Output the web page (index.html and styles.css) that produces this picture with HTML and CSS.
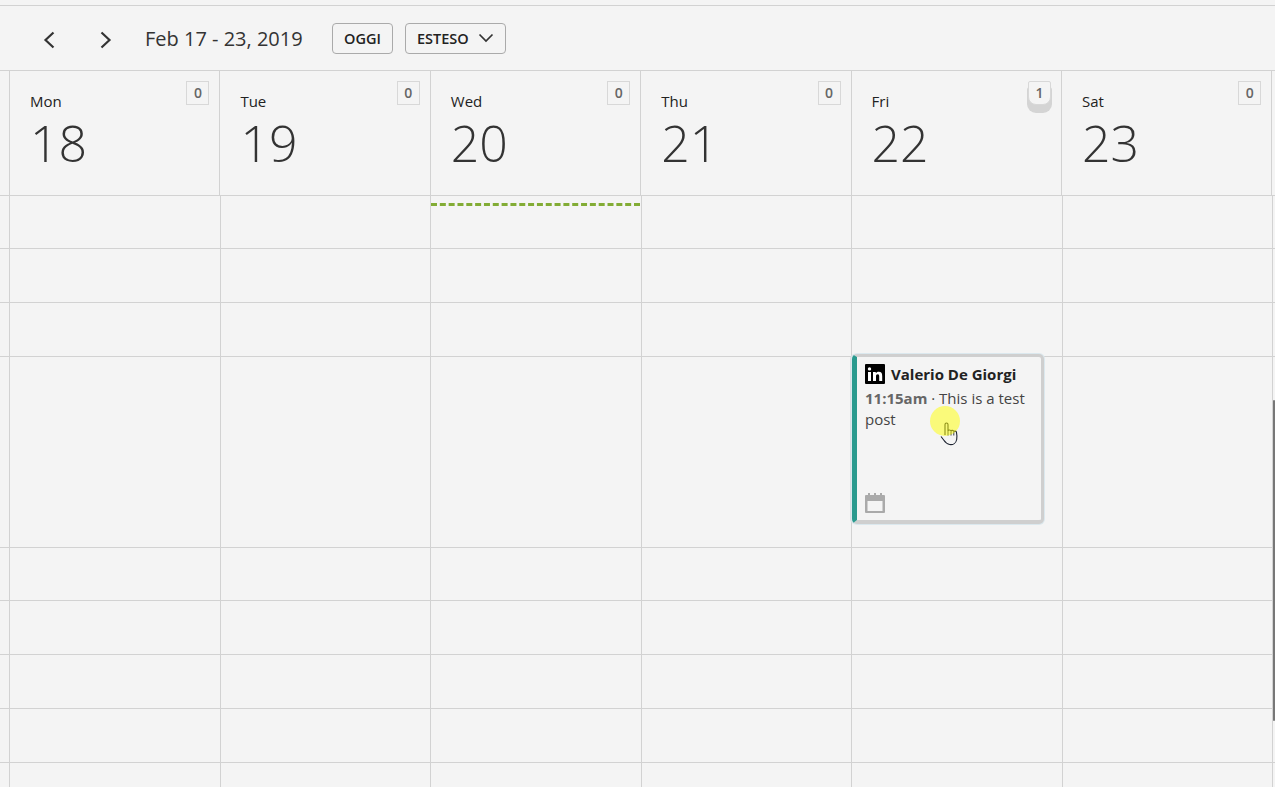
FILE: index.html
```html
<!DOCTYPE html>
<html lang="it">
<head>
    <meta charset="UTF-8">
    <meta name="viewport" content="width=device-width, initial-scale=1.0">
    <title>Calendario</title>
    <link rel="stylesheet" href="styles.css">
</head>
<body>
    <div class="top-strip"></div>
    <div class="toolbar">
        <button class="nav-btn" aria-label="Precedente">
            <svg width="14" height="20" viewBox="0 0 14 20"><path d="M11.500 2.500 3.500 10l8 7.500" fill="none" stroke="#333" stroke-width="2.200"/></svg>
        </button>
        <button class="nav-btn" aria-label="Successivo">
            <svg width="14" height="20" viewBox="0 0 14 20"><path d="M3.500 2.500 11.500 10l-8 7.500" fill="none" stroke="#333" stroke-width="2.200"/></svg>
        </button>
        <div class="range">Feb 17 - 23, 2019</div>
        <button class="btn">OGGI</button>
        <button class="btn btn-view">ESTESO
            <svg width="16" height="10" viewBox="0 0 16 10"><path d="M1.500 1.500 8 8l6.500-6.500" fill="none" stroke="#333" stroke-width="1.700"/></svg>
        </button>
    </div>

    <div class="week-head">
        <div class="day-head day-blank"></div>
        <div class="day-head"><span class="day-name">Mon</span><span class="day-num">18</span><span class="count">0</span></div>
        <div class="day-head"><span class="day-name">Tue</span><span class="day-num">19</span><span class="count">0</span></div>
        <div class="day-head"><span class="day-name">Wed</span><span class="day-num">20</span><span class="count">0</span></div>
        <div class="day-head"><span class="day-name">Thu</span><span class="day-num">21</span><span class="count">0</span></div>
        <div class="day-head"><span class="day-name">Fri</span><span class="day-num">22</span><span class="count count-stack">1</span></div>
        <div class="day-head"><span class="day-name">Sat</span><span class="day-num">23</span><span class="count">0</span></div>
        <div class="day-head day-blank day-end"></div>
    </div>

    <div class="week-body" id="grid"></div>
    <div class="scroll-thumb"></div>

    <script>
        // righe della griglia: altezze prese dalla vista settimanale
        const rows = [53, 54, 54, 191, 53, 54, 54, 54, 25];
        const grid = document.getElementById('grid');
        const eventHtml = `
            <div class="event">
                <div class="event-title">
                    <svg class="li-icon" width="20" height="20" viewBox="0 0 20 20"><rect width="20" height="20" rx="1" fill="#000"/><path d="M3 8h3v9H3zM4.500 3.200a1.700 1.700 0 1 1 0 3.400 1.700 1.700 0 0 1 0-3.400zM8 8h2.800v1.300C11.300 8.500 12.300 7.800 13.800 7.800c2.500 0 3.400 1.500 3.400 4.100V17h-3v-4.600c0-1.200-.3-2.100-1.500-2.100S11 11.200 11 12.400V17H8z" fill="#fff"/></svg>
                    <span class="event-name">Valerio De Giorgi</span>
                </div>
                <div class="event-text"><b>11:15am</b> · This is a test post</div>
                <svg class="cal-icon" width="20" height="20" viewBox="0 0 20 20"><rect y="2" width="20" height="18" rx="1" fill="#aaa"/><rect x="2.500" y="8" width="15" height="10" fill="#f4f4f4"/><path d="M3 0h2v3H3zM9 0h2v3H9zM15 0h2v3h-2z" fill="#aaa"/></svg>
                <svg class="hand" width="19" height="25" viewBox="0 0 19 25"><path d="M5 13V2.500c0-2 3-2 3 0V9c.2-1.400 2.800-1.400 3 .3.300-1.300 2.600-1.200 2.800.4.400-1 2.500-.8 2.700.8.500 2.500.6 5 .2 7-.7 3.500-3.700 5.500-7 5-2.800-.4-4.500-2.300-6-4.500L1 14.500" fill="none" stroke="#1c2230" stroke-width="1.100"/><path d="M8 9v4.500M11 9.500v4M13.800 10v3.500" fill="none" stroke="#1c2230" stroke-width=".9"/></svg>
                <div class="click-dot"></div>
            </div>`;

        rows.forEach((h, r) => {
            for (let c = 0; c < 8; c++) {
                const cell = document.createElement('div');
                cell.className = 'cell';
                cell.style.height = `${h}px`;
                if (r === 0 && c === 3) cell.innerHTML = '<div class="now-line"></div>';
                if (r === 3 && c === 5) cell.innerHTML = eventHtml;
                grid.appendChild(cell);
            }
        });
    </script>
</body>
</html>
```

FILE: styles.css
```css
html, body {
    height: 100%;
}
body {
    margin: 0;
    background-color: #f4f4f4;
    font-family: "Open Sans", "Liberation Sans", sans-serif;
    color: #333;
    overflow: hidden;
    position: relative;
}
.top-strip {
    height: 5px;
    border-bottom: 1px solid #d2d2d2;
}
.toolbar {
    display: flex;
    align-items: center;
    height: 65px;
    box-sizing: border-box;
    border-bottom: 1px solid #d2d2d2;
    padding: 0 0 0 42px;
}
.nav-btn {
    width: 14px;
    height: 20px;
    padding: 0;
    margin: 4px 42px 0 0;
    border: none;
    background: none;
    display: flex;
}
.nav-btn + .nav-btn {
    margin-right: 33px;
}
.range {
    font-size: 20px;
    width: 187px;
    color: #333;
}
.btn {
    height: 31px;
    padding: 0 11px;
    margin-right: 12px;
    box-sizing: border-box;
    font-family: inherit;
    font-size: 14.500px;
    font-weight: 600;
    color: #222;
    background-color: #f4f4f4;
    border: 1px solid #aaa;
    border-radius: 4px;
    display: flex;
    align-items: center;
}
.btn-view {
    gap: 9px;
}
.week-head {
    display: grid;
    grid-template-columns: 10px repeat(6, 210.4px) 1fr;
    height: 125px;
    box-sizing: border-box;
    border-bottom: 1px solid #d2d2d2;
}
.day-head {
    position: relative;
    box-sizing: border-box;
    height: 124px;
    border-right: 1px solid #d2d2d2;
    padding: 20px 0 0 20px;
    display: flex;
    flex-direction: column;
}
.day-blank {
    padding: 0;
}
.day-end {
    border-right: none;
}
.day-name {
    font-size: 15px;
    line-height: 20px;
    color: #222;
}
.day-num {
    font-size: 50px;
    font-weight: 300;
    line-height: 64px;
    color: #333;
}
.count {
    position: absolute;
    top: 10px;
    right: 10px;
    width: 21px;
    height: 22px;
    border: 1px solid #d8d8d8;
    font-size: 14px;
    font-weight: 600;
    line-height: 22px;
    text-align: center;
    color: #666;
    background-color: #f4f4f4;
}
.count-stack {
    box-shadow: 0 7px 0 1px #d4d4d4;
    border-radius: 2px 2px 8px 8px;
}
.week-body {
    display: grid;
    grid-template-columns: 10px repeat(6, 210.5px) 1fr;
}
.cell {
    position: relative;
    box-sizing: border-box;
    border-right: 1px solid #d2d2d2;
    border-bottom: 1px solid #d2d2d2;
}
.cell:nth-child(8n) {
    border-right: none;
}
.now-line {
    margin: 7px 1px 0 0;
    border-top: 3px dashed #82ac35;
}
.event {
    position: absolute;
    top: -3px;
    left: 0;
    width: 192px;
    height: 170px;
    box-sizing: border-box;
    padding: 7px 8px 0 8px;
    background-color: #f4f4f4;
    border: 3px solid #cfcfcf;
    border-bottom-width: 4px;
    border-left: 5px solid #2a9a8e;
    border-radius: 5px;
    box-shadow: 0 0 0 1px #dbe8ee, -2px 0 0 0 #d8e0e3;
    z-index: 2;
}
.event-title {
    display: flex;
    align-items: center;
    gap: 6px;
    height: 20px;
}
.event-name {
    font-size: 15px;
    font-weight: 700;
    color: #222;
}
.event-text {
    margin-top: 4px;
    font-size: 15px;
    line-height: 21px;
    color: #444;
}
.event-text b {
    font-weight: 700;
    color: #666;
}
.cal-icon {
    position: absolute;
    left: 8px;
    bottom: 7px;
}
.hand {
    position: absolute;
    left: 83px;
    top: 65px;
}
.click-dot {
    position: absolute;
    left: 73px;
    top: 49px;
    width: 30px;
    height: 30px;
    border-radius: 50%;
    background-color: rgba(255, 255, 0, 0.5);
}
.scroll-thumb {
    position: absolute;
    top: 400px;
    right: 0;
    width: 2px;
    height: 321px;
    background-color: #777;
    border-radius: 1px;
}
```
